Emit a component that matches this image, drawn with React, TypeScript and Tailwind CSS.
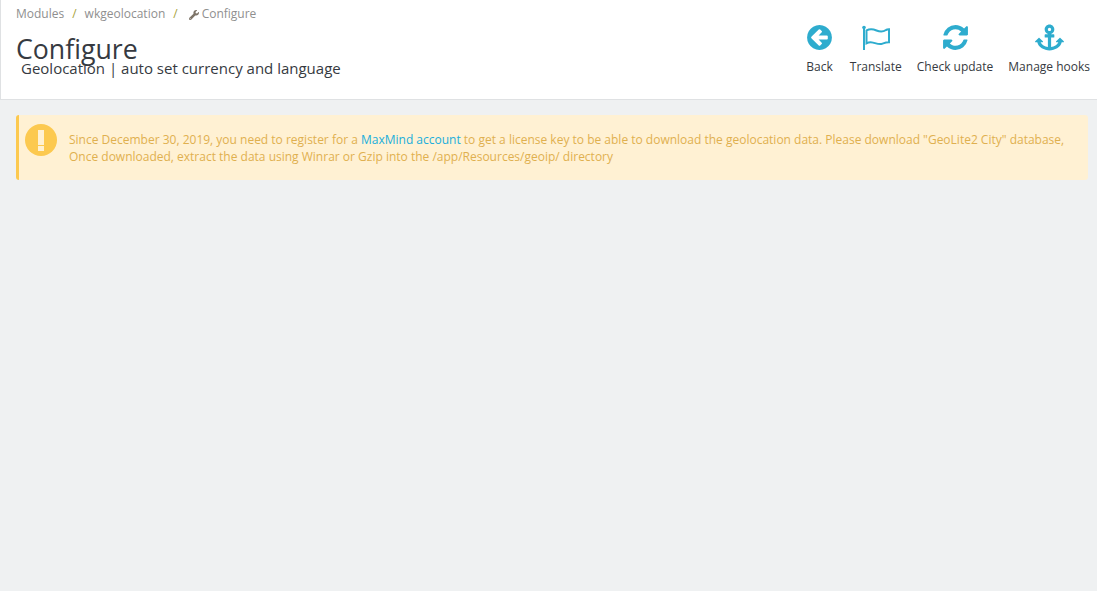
import React from 'react';
import { FaAnchor, FaWrench } from 'react-icons/fa';

const font = "font-['Open_Sans',sans-serif]";

function BackIcon() {
  return (
    <svg width="29" height="29" viewBox="0 0 1792 1792" fill="#2eacce" className="shrink-0">
      <path d="M1408 960v-128q0-26-19-45t-45-19h-502l189-189q19-19 19-45t-19-45l-91-91q-18-18-45-18t-45 18l-362 362-91 91q-18 18-18 45t18 45l91 91 362 362q18 18 45 18t45-18l91-91q18-18 18-45t-18-45l-189-189h502q26 0 45-19t19-45zm256-64q0 209-103 385.500t-279.500 279.500-385.500 103-385.500-103-279.500-279.500-103-385.500 103-385.500 279.500-279.500 385.500-103 385.500 103 279.500 279.500 103 385.500z" />
    </svg>
  );
}

function RefreshIcon() {
  return (
    <svg width="29" height="29" viewBox="0 0 1792 1792" fill="#2eacce" className="shrink-0">
      <path d="M1639 1056q0 5-1 7-64 268-268 434.500t-478 166.500q-146 0-282.500-55t-243.500-157l-129 129q-19 19-45 19t-45-19-19-45v-448q0-26 19-45t45-19h448q26 0 45 19t19 45-19 45l-137 137q71 66 161 102t187 36q134 0 250-65t186-179q11-17 53-117 8-23 30-23h192q13 0 22.500 9.500t9.500 22.500zm25-800v448q0 26-19 45t-45 19h-448q-26 0-45-19t-19-45 19-45l138-138q-148-137-349-137-134 0-250 65t-186 179q-11 17-53 117-8 23-30 23h-199q-13 0-22.500-9.500t-9.500-22.500v-7q65-268 270-434.500t480-166.500q146 0 284 55.500t245 156.500l130-129q19-19 45-19t45 19 19 45z" />
    </svg>
  );
}

function FlagIcon() {
  return (
    <svg width="28" height="26" viewBox="0 0 28 26" fill="none" stroke="#2eacce" className="shrink-0">
      <circle cx="2" cy="2.500" r="1.800" fill="#2eacce" stroke="none" />
      <path d="M2 3v22" strokeWidth="2" />
      <path d="M4.500 5.500c3-1.600 6-1.600 10 0s7 1.200 9.500-.5c1-.5 3-.7 3-.7v13c-3 0-5 .8-7 1.500-3 .8-6-.5-9-1.200-2.500-.6-4.500-.3-6.500.7z" strokeWidth="2" />
    </svg>
  );
}

export default function App() {
  const tools = [
    { label: 'Back', icon: <BackIcon />, cls: 'mr-[2px]' },
    { label: 'Translate', icon: <FlagIcon />, cls: '' },
    { label: 'Check update', icon: <RefreshIcon />, cls: '' },
    { label: 'Manage hooks', icon: <FaAnchor size={29} color="#2eacce" className="shrink-0" />, cls: '' },
  ];

  return (
    <div className={`${font} min-h-[591px] bg-[#eff1f2]`}>
      {/* Page head */}
      <div className="flex h-[100px] justify-between border-b border-l border-[#dfe1e3] bg-white pl-[15px] pr-[7px]">
        <div className="pt-[6px]">
          <div className="flex items-center text-xs leading-[16px] text-[#8f8f8f]">
            <span>Modules</span>
            <span className="mx-[8px] text-[#a8a23c]">/</span>
            <span>wkgeolocation</span>
            <span className="ml-[8px] mr-[11px] text-[#a8a23c]">/</span>
            <FaWrench size={10} className="mr-[3px] mt-[2px] text-[#7d7468]" />
            <span>Configure</span>
          </div>
          <h1 className="mt-[10px] text-[26.700px] leading-[34px] font-normal text-[#363a41]">Configure</h1>
          <h2 className="-mt-[8px] ml-[5px] text-[15px] leading-[20px] font-normal text-[#363a41]">
            Geolocation | auto set currency and language
          </h2>
        </div>
        <div className="flex gap-[15px] pt-[23px]">
          {tools.map((t) => (
            <div key={t.label} className={`flex flex-col items-center ${t.cls}`}>
              <div className="flex h-[29px] w-[25px] items-center justify-center">{t.icon}</div>
              <span className="mt-[7px] text-xs leading-[16px] text-[#363a41]">{t.label}</span>
            </div>
          ))}
        </div>
      </div>

      {/* Warning */}
      <div className="mx-[9px] ml-[16px] mt-[15px] flex h-[65px] rounded-[3px] border-l-[3px] border-[#fcc94f] bg-[#fff1d3] pl-[6px] pt-[9px]">
        <div className="flex h-[32px] w-[32px] shrink-0 items-center justify-center rounded-full bg-[#fcc94f]">
          <span className="flex flex-col items-center">
            <span className="h-[15px] w-[6px] bg-[#fff1d3]" />
            <span className="mt-[1px] h-[5px] w-[6px] bg-[#fff1d3]" />
          </span>
        </div>
        <p className="ml-[12px] mt-[7px] text-xs leading-[17px] text-[#dfb04f]">
          Since December 30, 2019, you need to register for a <span className="text-[#20aedb]">MaxMind account</span> to get a license key to be able to download the geolocation data. Please download "GeoLite2 City" database,
          <br />
          Once downloaded, extract the data using Winrar or Gzip into the /app/Resources/geoip/ directory
        </p>
      </div>
    </div>
  );
}
